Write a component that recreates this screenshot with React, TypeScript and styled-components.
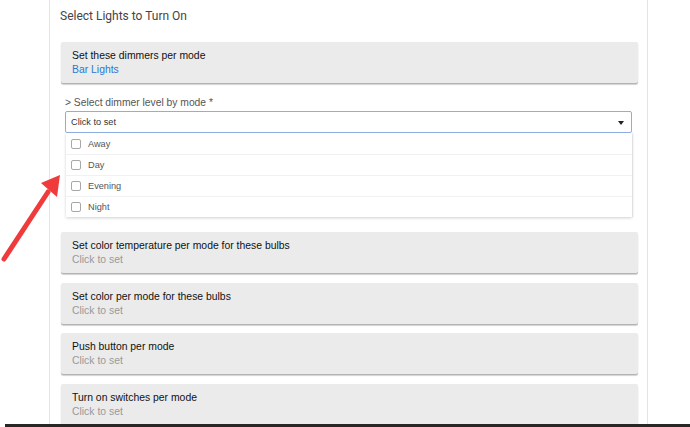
import React, { FC } from "react";
import styled, { createGlobalStyle } from "styled-components";

const GlobalStyle = createGlobalStyle`
	html, body {
		margin: 0;
		padding: 0;
		background: #fff;
	}
	body {
		font-family: "Liberation Sans", Arial, sans-serif;
	}
`;

const Page = styled.div`
	position: relative;
	width: 690px;
	height: 427px;
	overflow: hidden;
	background: #fff;
`;

const Panel = styled.div`
	margin-left: 49px;
	width: 577px;
	height: 424px;
	border-left: 1px solid #e4e4e4;
	border-right: 1px solid #e4e4e4;
	padding: 0 9px 0 11px;
	box-sizing: content-box;
`;

const PanelTitle = styled.div`
	padding-top: 8px;
	height: 16px;
	line-height: 16px;
	margin-left: -1px;
	margin-bottom: 18px;
	font-family: Roboto, sans-serif;
	font-size: 12px;
	color: #444;
`;

const Card = styled.div<{ $gap?: number }>`
	height: 41px;
	box-sizing: border-box;
	padding: 7px 11px 0;
	margin-bottom: ${(p) => p.$gap ?? 9.5}px;
	background: #ebebeb;
	border-radius: 2px;
	box-shadow: 0 1px 1px rgba(0, 0, 0, 0.18), 0 2px 1px rgba(0, 0, 0, 0.16);
	font-size: 10.4px;
	line-height: 14px;
`;

const CardTitle = styled.div`
	color: #111;
`;

const CardValue = styled.div<{ $set?: boolean }>`
	color: ${(p) => (p.$set ? "#2b78d3" : "#999")};
`;

const Field = styled.div`
	margin: 13px 6px 15px 4px;
`;

const FieldLabel = styled.div`
	font-size: 10.3px;
	line-height: 14px;
	color: #555;
	margin-bottom: 1px;
`;

const SelectBox = styled.div`
	position: relative;
	height: 22px;
	box-sizing: border-box;
	border: 1px solid #8eaee0;
	border-radius: 2px;
	padding: 0 0 0 5px;
	display: flex;
	align-items: center;
	font-size: 9.2px;
	color: #333;
`;

const Caret = styled.span`
	position: absolute;
	right: 7px;
	top: 9px;
	width: 0;
	height: 0;
	border-left: 3.5px solid transparent;
	border-right: 3.5px solid transparent;
	border-top: 4px solid #222;
`;

const Menu = styled.div`
	margin-left: 1px;
	background: #fff;
	box-shadow: 0 1px 3px rgba(0, 0, 0, 0.18), 1px 0 1px rgba(0, 0, 0, 0.06);
`;

const Option = styled.div`
	height: 21px;
	box-sizing: border-box;
	display: flex;
	align-items: center;
	padding-left: 5px;
	border-top: 1px solid #f1f1f1;
	font-size: 9.2px;
	color: #555;
	&:first-child {
		border-top: none;
	}
`;

const CheckBox = styled.span`
	width: 10px;
	height: 10px;
	box-sizing: border-box;
	border: 1px solid #a8a8a8;
	border-radius: 2px;
	margin-right: 7px;
`;

const BottomBar = styled.div`
	position: absolute;
	left: 5px;
	right: 0;
	bottom: 0;
	height: 3px;
	background: #2b2626;
`;

const ArrowSvg = styled.svg`
	position: absolute;
	left: 0;
	top: 160px;
`;

const modes = ["Away", "Day", "Evening", "Night"];

const cards = [
	"Set color temperature per mode for these bulbs",
	"Set color per mode for these bulbs",
	"Push button per mode",
	"Turn on switches per mode",
];

const RedArrow: FC = () => (
	<ArrowSvg width="80" height="110" viewBox="0 0 80 110">
		<line
			x1="4"
			y1="99"
			x2="48"
			y2="32"
			stroke="#ef3b3b"
			strokeWidth="5"
			strokeLinecap="round"
		/>
		<polygon points="60,15 41,23 57,37" fill="#ef3b3b" />
	</ArrowSvg>
);

const App: FC = () => {
	return (
		<Page>
			<GlobalStyle />
			<Panel>
				<PanelTitle>Select Lights to Turn On</PanelTitle>
				<Card $gap={0}>
					<CardTitle>Set these dimmers per mode</CardTitle>
					<CardValue $set>Bar Lights</CardValue>
				</Card>
				<Field>
					<FieldLabel>{`> Select dimmer level by mode *`}</FieldLabel>
					<SelectBox>
						Click to set
						<Caret />
					</SelectBox>
					<Menu>
						{modes.map((m) => (
							<Option key={m}>
								<CheckBox />
								{m}
							</Option>
						))}
					</Menu>
				</Field>
				{cards.map((c) => (
					<Card key={c}>
						<CardTitle>{c}</CardTitle>
						<CardValue>Click to set</CardValue>
					</Card>
				))}
			</Panel>
			<RedArrow />
			<BottomBar />
		</Page>
	);
};

export default App;
